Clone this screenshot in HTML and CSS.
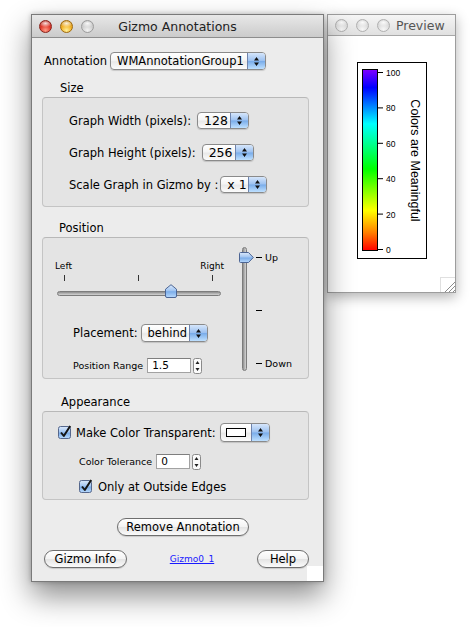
FILE: index.html
```html
<!DOCTYPE html>
<html lang="en">
<head>
  <meta charset="UTF-8" />
  <title>Gizmo Annotations</title>
  <link rel="stylesheet" href="styles.css">
</head>
<body>

<svg class="defs" width="0" height="0">
  <defs>
    <linearGradient id="aqua" x1="0" y1="0" x2="0" y2="1">
      <stop offset="0" stop-color="#dbe9fb"/>
      <stop offset="0.45" stop-color="#a3c6f2"/>
      <stop offset="0.55" stop-color="#7cade9"/>
      <stop offset="1" stop-color="#b9dafd"/>
    </linearGradient>
    <linearGradient id="rainbow" x1="0" y1="0" x2="0" y2="1">
      <stop offset="0" stop-color="#8000ff"/>
      <stop offset="0.1" stop-color="#0000ff"/>
      <stop offset="0.3" stop-color="#00ffff"/>
      <stop offset="0.55" stop-color="#00ff00"/>
      <stop offset="0.78" stop-color="#ffff00"/>
      <stop offset="0.9" stop-color="#ff8000"/>
      <stop offset="1" stop-color="#ff0000"/>
    </linearGradient>
  </defs>
</svg>

<div class="desk">

  <div class="win preview">
    <div class="titlebar small">
      <div class="lights">
        <span class="light dim"></span><span class="light dim"></span><span class="light dim"></span>
      </div>
      <span class="title pv-title">Preview</span>
    </div>
    <div class="pv-body">
      <svg class="legend" width="70" height="197" viewBox="0 0 70 197">
        <rect x="0.5" y="0.5" width="69" height="196" fill="#fff" stroke="#000"/>
        <rect x="5.5" y="7.5" width="15" height="181" fill="url(#rainbow)" stroke="#000"/>
        <path d="M20 10.5h6M20 45.9h6M20 81.3h6M20 116.7h6M20 152.1h6M20 187.5h6" stroke="#000"/>
        <g class="legend-num">
          <text x="29" y="13.5">100</text>
          <text x="29" y="49">80</text>
          <text x="29" y="84.5">60</text>
          <text x="29" y="120">40</text>
          <text x="29" y="155.5">20</text>
          <text x="29" y="190.5">0</text>
        </g>
        <text class="legend-title" transform="translate(58 98.5) rotate(90)">Colors are Meaningful</text>
      </svg>
      <span class="grip">
        <svg width="15" height="15" viewBox="0 0 15 15">
          <path d="M4 14L14 4M8 14L14 8M12 14L14 12" stroke="#8c8c8c"/>
          <path d="M5 14L14 5M9 14L14 9" stroke="#fff"/>
        </svg>
      </span>
    </div>
  </div>

  <div class="win main">
    <div class="titlebar centered">
      <div class="lights">
        <span class="light red"></span><span class="light yellow"></span><span class="light off"></span>
      </div>
      <span class="title">Gizmo Annotations</span>
      <span></span>
    </div>

    <div class="content">

      <div class="annot-row">
        <span>Annotation</span>
        <span class="popup popup-annot">
          <span class="popup-val">WMAnnotationGroup1</span>
          <span class="popup-arrows"><svg width="7" height="11" viewBox="0 0 7 11"><path d="M3.5 1L6 4.5H1ZM3.5 10L6 6.5H1Z" fill="#111"/></svg></span>
        </span>
      </div>

      <div class="group-label">Size</div>
      <div class="group size-group">
        <div class="size-row">
          <span>Graph Width (pixels):</span>
          <span class="popup popup-num">
            <span class="popup-val">128</span>
            <span class="popup-arrows"><svg width="7" height="11" viewBox="0 0 7 11"><path d="M3.5 1L6 4.5H1ZM3.5 10L6 6.5H1Z" fill="#111"/></svg></span>
          </span>
        </div>
        <div class="size-row">
          <span>Graph Height (pixels):</span>
          <span class="popup popup-num">
            <span class="popup-val">256</span>
            <span class="popup-arrows"><svg width="7" height="11" viewBox="0 0 7 11"><path d="M3.5 1L6 4.5H1ZM3.5 10L6 6.5H1Z" fill="#111"/></svg></span>
          </span>
        </div>
        <div class="size-row scale-row">
          <span>Scale Graph in Gizmo by :</span>
          <span class="popup popup-scale">
            <span class="popup-val">x 1</span>
            <span class="popup-arrows"><svg width="7" height="11" viewBox="0 0 7 11"><path d="M3.5 1L6 4.5H1ZM3.5 10L6 6.5H1Z" fill="#111"/></svg></span>
          </span>
        </div>
      </div>

      <div class="group-label gap-pos">Position</div>
      <div class="group pos-group">
        <div class="pos-left">
          <div class="hs-labels"><span>Left</span><span>Right</span></div>
          <div class="hs-ticks"><span class="tick"></span><span class="tick"></span><span class="tick"></span></div>
          <div class="hs-track">
            <svg class="hs-thumb" width="12" height="14" viewBox="0 0 12 14">
              <path d="M6 0.7L11.5 5.2V12Q11.5 13.5 10 13.5H2Q0.5 13.5 0.5 12V5.2Z" fill="url(#aqua)" stroke="#4c6594"/>
            </svg>
          </div>
          <div class="placement-row">
            <span>Placement:</span>
            <span class="popup popup-behind">
              <span class="popup-val">behind</span>
              <span class="popup-arrows"><svg width="7" height="11" viewBox="0 0 7 11"><path d="M3.5 1L6 4.5H1ZM3.5 10L6 6.5H1Z" fill="#111"/></svg></span>
            </span>
          </div>
          <div class="field-row">
            <span class="small-label">Position Range</span>
            <span class="field field-range">1.5</span>
            <svg class="stepper" width="9" height="16" viewBox="0 0 9 16">
              <rect x="0.5" y="0.5" width="8" height="15" rx="2" fill="#fbfbfb" stroke="#8a8a8a"/>
              <path d="M4.5 3L6.5 6H2.5ZM4.5 13L6.5 10H2.5Z" fill="#222"/>
            </svg>
          </div>
        </div>
        <div class="pos-right">
          <div class="vslider">
            <div class="vs-track"></div>
            <svg class="vs-thumb" width="15" height="11" viewBox="0 0 15 11">
              <path d="M1.5 0.5H9.5L14.3 5.5L9.5 10.5H1.5Q0.5 10.5 0.5 9.5V1.5Q0.5 0.5 1.5 0.5Z" fill="url(#aqua)" stroke="#4c6594"/>
            </svg>
          </div>
          <div class="vs-labels">
            <span class="vs-label"><span class="dash"></span>Up</span>
            <span class="vs-label"><span class="dash"></span></span>
            <span class="vs-label"><span class="dash"></span>Down</span>
          </div>
        </div>
      </div>

      <div class="group-label gap-app">Appearance</div>
      <div class="group app-group">
        <div class="check-row">
          <svg class="chk" width="14" height="14" viewBox="0 0 14 14">
            <rect x="0.5" y="1.5" width="12" height="12" rx="2" fill="url(#aqua)" stroke="#55678c"/>
            <path d="M3 7.5L5.8 11L12.2 1" stroke="#151515" stroke-width="2" fill="none" stroke-linejoin="round"/>
          </svg>
          <span>Make Color Transparent:</span>
          <span class="popup popup-color">
            <span class="popup-val"><span class="swatch"></span></span>
            <span class="popup-arrows"><svg width="7" height="11" viewBox="0 0 7 11"><path d="M3.5 1L6 4.5H1ZM3.5 10L6 6.5H1Z" fill="#111"/></svg></span>
          </span>
        </div>
        <div class="field-row tol-row">
          <span class="small-label">Color Tolerance</span>
          <span class="field field-tol">0</span>
          <svg class="stepper" width="9" height="16" viewBox="0 0 9 16">
            <rect x="0.5" y="0.5" width="8" height="15" rx="2" fill="#fbfbfb" stroke="#8a8a8a"/>
            <path d="M4.5 3L6.5 6H2.5ZM4.5 13L6.5 10H2.5Z" fill="#222"/>
          </svg>
        </div>
        <div class="check-row edge-row">
          <svg class="chk" width="14" height="14" viewBox="0 0 14 14">
            <rect x="0.5" y="1.5" width="12" height="12" rx="2" fill="url(#aqua)" stroke="#55678c"/>
            <path d="M3 7.5L5.8 11L12.2 1" stroke="#151515" stroke-width="2" fill="none" stroke-linejoin="round"/>
          </svg>
          <span>Only at Outside Edges</span>
        </div>
      </div>

      <button class="btn btn-remove">Remove Annotation</button>

      <div class="btn-row">
        <button class="btn btn-info">Gizmo Info</button>
        <a class="link" href="#">Gizmo0_1</a>
        <button class="btn btn-help">Help</button>
      </div>

    </div>
    <span class="growbox"></span>
  </div>

</div>

</body>
</html>
```

FILE: styles.css
```css
body {
  margin: 0;
  background: #ffffff;
  font-family: "DejaVu Sans", sans-serif;
  font-size: 11.5px;
  color: #000;
}

.defs {
  position: absolute;
}

.desk {
  position: relative;
  width: 471px;
  height: 627px;
  overflow: hidden;
}

/* windows */

.win {
  position: absolute;
  box-sizing: border-box;
  border: 1px solid #7a7a7a;
  background: #ececec;
}

.main {
  left: 31px;
  top: 14px;
  width: 293px;
  height: 568px;
  z-index: 2;
  box-shadow: 0 14px 28px rgba(0, 0, 0, 0.45), 0 0 5px rgba(0, 0, 0, 0.25);
}

.preview {
  left: 327px;
  top: 14px;
  width: 129px;
  height: 279px;
  border-color: #9d9d9d;
  background: #fff;
  box-shadow: 0 4px 12px rgba(0, 0, 0, 0.3);
}

.titlebar {
  height: 23px;
  box-sizing: border-box;
  border-bottom: 1px solid #8d8d8d;
  background: linear-gradient(#e8e8e8, #cbcbcb);
  display: flex;
  align-items: center;
}

.titlebar.centered {
  display: grid;
  grid-template-columns: 1fr auto 1fr;
}

.titlebar.small {
  height: 21px;
  border-bottom-color: #a8a8a8;
  background: linear-gradient(#f5f5f5, #e0e0e0);
}

.lights {
  display: flex;
  gap: 8px;
  padding-left: 7px;
}

.light {
  width: 13px;
  height: 13px;
  border-radius: 50%;
  box-sizing: border-box;
}

.red {
  border: 1px solid #8a2119;
  background: radial-gradient(ellipse 60% 35% at 50% 22%, rgba(255, 255, 255, 0.85), rgba(255, 255, 255, 0)),
              radial-gradient(circle at 50% 85%, #ff9c86 0, #e0392c 50%, #a3170f 100%);
}

.yellow {
  border: 1px solid #a06a0c;
  background: radial-gradient(ellipse 60% 35% at 50% 22%, rgba(255, 255, 255, 0.85), rgba(255, 255, 255, 0)),
              radial-gradient(circle at 50% 85%, #fff09a 0, #f2b126 50%, #b87a08 100%);
}

.off {
  border: 1px solid #9c9c9c;
  background: radial-gradient(ellipse 60% 35% at 50% 22%, rgba(255, 255, 255, 0.9), rgba(255, 255, 255, 0)),
              radial-gradient(circle at 50% 85%, #f2f2f2 0, #cdcdcd 55%, #a9a9a9 100%);
}

.dim {
  border: 1px solid #b0b0b0;
  background: radial-gradient(ellipse 60% 35% at 50% 22%, rgba(255, 255, 255, 0.9), rgba(255, 255, 255, 0)),
              radial-gradient(circle at 50% 85%, #f7f7f7 0, #dcdcdc 55%, #c2c2c2 100%);
}

.title {
  font-size: 12.5px;
  color: #222;
}

.pv-title {
  margin-left: 6px;
  color: #555;
}

/* preview */

.pv-body {
  position: relative;
  height: 256px;
  box-sizing: border-box;
  padding: 26px 0 0 29px;
}

.legend {
  display: block;
}

.legend-num {
  font-family: "Liberation Sans", sans-serif;
  font-size: 8.5px;
}

.legend-title {
  font-family: "Liberation Sans", sans-serif;
  font-size: 12.5px;
  text-anchor: middle;
  dominant-baseline: central;
}

.grip {
  position: absolute;
  right: 0;
  bottom: 0;
  width: 15px;
  height: 15px;
  box-sizing: border-box;
  border-top: 1px solid #e0e0e0;
  border-left: 1px solid #e0e0e0;
}

.grip svg {
  display: block;
}

/* main content */

.content {
  padding-top: 14px;
}

.annot-row {
  display: flex;
  align-items: center;
  gap: 3px;
  height: 18px;
  margin-left: 12px;
}

.group-label {
  margin: 11px 0 2px 28px;
  line-height: 14px;
}

.gap-pos {
  margin-top: 14px;
  margin-left: 27px;
}

.gap-app {
  margin-top: 16px;
  margin-left: 29px;
}

.group {
  margin-left: 10px;
  width: 267px;
  box-sizing: border-box;
  border: 1px solid #c4c4c4;
  border-top-color: #b8b8b8;
  border-radius: 4px;
  background: #e4e4e4;
}

.size-group {
  height: 110px;
  padding: 14px 0 0 26px;
  display: flex;
  flex-direction: column;
  gap: 15px;
}

.size-row {
  display: flex;
  align-items: center;
  gap: 6px;
  height: 17px;
}

.scale-row {
  gap: 2px;
}

/* popups */

.popup {
  display: flex;
  box-sizing: border-box;
  height: 18px;
  border: 1px solid #8a8a8a;
  border-radius: 4px;
  background: linear-gradient(#ffffff, #f5f5f5 45%, #e9e9e9 55%, #fcfcfc);
  box-shadow: 0 1px 1px rgba(0, 0, 0, 0.15);
  overflow: hidden;
}

.popup-val {
  flex: 1;
  display: flex;
  align-items: center;
  padding-left: 6px;
  white-space: nowrap;
}

.popup-arrows {
  width: 17px;
  border-left: 1px solid #6f84ad;
  background: linear-gradient(#d6e6fb, #9cc1f0 48%, #79ace9 52%, #bee0ff);
  display: flex;
  align-items: center;
  justify-content: center;
}

.popup-annot { width: 156px; }
.popup-num { width: 52px; height: 17px; font-size: 12.5px; }
.popup-scale { width: 47px; height: 17px; font-size: 12.5px; }
.popup-behind { width: 67px; }
.popup-color { width: 50px; height: 19px; }

.swatch {
  width: 20px;
  height: 9px;
  box-sizing: border-box;
  border: 1px solid #000;
  background: #fff;
  margin-left: -1px;
}

/* position group */

.pos-group {
  height: 142px;
  display: flex;
}

.pos-left {
  width: 184px;
  box-sizing: border-box;
  padding: 23px 0 0 12px;
}

.hs-labels {
  display: flex;
  justify-content: space-between;
  width: 169px;
  font-size: 9px;
  line-height: 11px;
}

.hs-ticks {
  display: flex;
  justify-content: space-between;
  width: 149px;
  height: 6px;
  margin: 3px 0 0 9px;
}

.tick {
  width: 1px;
  height: 6px;
  background: #333;
}

.hs-track {
  position: relative;
  width: 164px;
  height: 5px;
  margin: 10px 0 0 2px;
  box-sizing: border-box;
  border: 1px solid #7c7c7c;
  border-radius: 3px;
  background: linear-gradient(#8c8c8c, #bababa 60%, #d2d2d2);
}

.hs-thumb {
  position: absolute;
  left: 107px;
  top: -8px;
}

.placement-row {
  display: flex;
  align-items: center;
  gap: 3px;
  height: 18px;
  margin: 28px 0 0 18px;
}

.field-row {
  display: flex;
  align-items: center;
  gap: 4px;
  height: 15px;
  margin: 16px 0 0 18px;
}

.small-label {
  font-size: 9.5px;
}

.field {
  box-sizing: border-box;
  height: 15px;
  border: 1px solid #a2a2a2;
  border-top-color: #7e7e7e;
  background: #fff;
  font-size: 10.5px;
  line-height: 13px;
  padding-left: 4px;
}

.field-range { width: 44px; }
.field-tol { width: 34px; }

.stepper {
  display: block;
  margin-left: -2px;
}

.pos-right {
  display: flex;
  padding-top: 9px;
}

.vslider {
  position: relative;
  width: 15px;
  height: 124px;
  margin-left: 12px;
}

.vs-track {
  width: 5px;
  height: 124px;
  margin-left: 3px;
  box-sizing: border-box;
  border: 1px solid #7c7c7c;
  border-radius: 3px;
  background: linear-gradient(to right, #8c8c8c, #bababa 60%, #d2d2d2);
}

.vs-thumb {
  position: absolute;
  left: 0;
  top: 5px;
}

.vs-labels {
  display: flex;
  flex-direction: column;
  justify-content: space-between;
  height: 117px;
  margin: 5px 0 0 2px;
  font-size: 9.5px;
  line-height: 11px;
}

.vs-label {
  display: flex;
  align-items: center;
  gap: 3px;
  height: 11px;
}

.dash {
  width: 6px;
  height: 1px;
  background: #000;
}

/* appearance group */

.app-group {
  height: 89px;
  padding-top: 11px;
}

.check-row {
  display: flex;
  align-items: center;
  gap: 4px;
  height: 19px;
  margin-left: 15px;
}

.chk {
  display: block;
  margin-top: -2px;
}

.tol-row {
  margin: 12px 0 0 36px;
}

.edge-row {
  height: 13px;
  margin: 11px 0 0 36px;
  gap: 5px;
}

/* buttons */

.btn {
  display: flex;
  align-items: center;
  justify-content: center;
  box-sizing: border-box;
  height: 18px;
  padding: 0;
  border: 1px solid #6e6e6e;
  border-radius: 9px;
  background: linear-gradient(#ffffff, #f3f3f3 50%, #e4e4e4 52%, #fbfbfb);
  box-shadow: 0 1px 1px rgba(0, 0, 0, 0.15);
  font-family: inherit;
  font-size: 11.5px;
  color: #000;
}

.btn-remove {
  width: 132px;
  margin: 18px 0 0 85px;
}

.btn-row {
  display: flex;
  justify-content: space-between;
  align-items: center;
  margin: 14px 14px 0 12px;
}

.btn-info { width: 83px; }
.btn-help { width: 52px; }

.link {
  color: #1a1aff;
  font-size: 9px;
}

.growbox {
  position: absolute;
  right: 0;
  bottom: 0;
  width: 16px;
  height: 15px;
  background: #fff;
}
```
